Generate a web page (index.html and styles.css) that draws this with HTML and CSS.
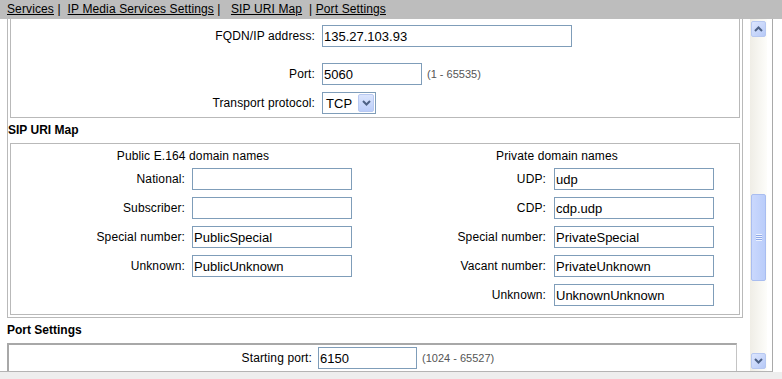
FILE: index.html
```html
<!DOCTYPE html>
<html lang="en">
<head>
    <meta charset="UTF-8">
    <meta name="viewport" content="width=device-width, initial-scale=1.0">
    <title>SIP URI Map</title>
    <link rel="stylesheet" href="styles.css">
</head>
<body>

<!-- Section links -->
<div class="tabs">
    <a href="#">Services</a> | &nbsp;<a href="#">IP Media Services Settings</a> | &nbsp; <a href="#">SIP URI Map</a> &nbsp;| <a href="#">Port Settings</a>
</div>

<div class="frame">
    <div class="pane">
        <div class="outer">
            <!-- Transport (scrolled, top is out of view) -->
            <div class="box box-transport">
                <div class="row">
                    <label>FQDN/IP address:</label>
                    <input type="text" class="field field-fqdn" value="135.27.103.93">
                </div>
                <div class="row row-port">
                    <label>Port:</label>
                    <input type="text" class="field field-port" value="5060">
                    <span class="hint">(1 - 65535)</span>
                </div>
                <div class="row row-select">
                    <label>Transport protocol:</label>
                    <div class="combo">
                        <span class="combo-text">TCP</span>
                        <span class="combo-btn">
                            <svg width="9" height="6" viewBox="0 0 9 6"><polyline points="1,1 4.5,4.5 8,1" fill="none" stroke="#4d6185" stroke-width="2"/></svg>
                        </span>
                    </div>
                </div>
            </div>

            <div class="section-title">SIP URI Map</div>

            <!-- SIP URI Map -->
            <div class="box sip-box">
                <div class="col col-public">
                    <div class="col-head">Public E.164 domain names</div>
                    <div class="row">
                        <label>National:</label>
                        <input type="text" class="field" value="">
                    </div>
                    <div class="row">
                        <label>Subscriber:</label>
                        <input type="text" class="field" value="">
                    </div>
                    <div class="row">
                        <label>Special number:</label>
                        <input type="text" class="field" value="PublicSpecial">
                    </div>
                    <div class="row">
                        <label>Unknown:</label>
                        <input type="text" class="field" value="PublicUnknown">
                    </div>
                </div>
                <div class="col col-private">
                    <div class="col-head">Private domain names</div>
                    <div class="row">
                        <label>UDP:</label>
                        <input type="text" class="field" value="udp">
                    </div>
                    <div class="row">
                        <label>CDP:</label>
                        <input type="text" class="field" value="cdp.udp">
                    </div>
                    <div class="row">
                        <label>Special number:</label>
                        <input type="text" class="field" value="PrivateSpecial">
                    </div>
                    <div class="row">
                        <label>Vacant number:</label>
                        <input type="text" class="field" value="PrivateUnknown">
                    </div>
                    <div class="row">
                        <label>Unknown:</label>
                        <input type="text" class="field" value="UnknownUnknown">
                    </div>
                </div>
            </div>
        </div>

        <div class="section-title section-port">Port Settings</div>

        <!-- Port Settings -->
        <div class="port-box">
            <div class="row">
                <label>Starting port:</label>
                <input type="text" class="field field-start" value="6150">
                <span class="hint">(1024 - 65527)</span>
            </div>
        </div>
    </div>

    <!-- Scrollbar -->
    <div class="scrollbar">
        <div class="sb-btn">
            <svg width="9" height="6" viewBox="0 0 9 6"><polyline points="1,5 4.5,1.5 8,5" fill="none" stroke="#4d6185" stroke-width="2"/></svg>
        </div>
        <div class="sb-track">
            <div class="sb-thumb" style="margin-top: 155px; height: 87px;">
                <span class="grip"></span>
            </div>
        </div>
        <div class="sb-btn">
            <svg width="9" height="6" viewBox="0 0 9 6"><polyline points="1,1 4.5,4.5 8,1" fill="none" stroke="#4d6185" stroke-width="2"/></svg>
        </div>
    </div>
</div>

<div class="statusbar"></div>

</body>
</html>
```

FILE: styles.css
```css
body {
    margin: 0;
    font-family: "Liberation Sans", Arial, sans-serif;
    font-size: 12px;
    letter-spacing: 0.12px;
    color: #000;
    background: #fff;
}
.tabs {
    height: 19px;
    line-height: 19px;
    background: #bdbdbd;
    padding-left: 7px;
    white-space: nowrap;
}
.tabs a {
    color: #000;
}
.frame {
    display: flex;
    width: 772px;
    height: 352px;
    border-right: 1px solid #a9a9a9;
    border-bottom: 1px solid #b4b4b4;
}
.pane {
    width: 750px;
    height: 100%;
    overflow: hidden;
}
.outer {
    margin-left: 7px;
    width: 734px;
    border: 1px solid #b9b9b9;
    border-top: none;
    padding-bottom: 2px;
}
.box {
    margin: 0 2px;
    border: 1px solid #b9b9b9;
}
.box-transport {
    border-top: none;
    padding: 6px 0 3px;
}
.row {
    display: flex;
    align-items: center;
    height: 22px;
}
.row label {
    text-align: right;
    white-space: nowrap;
}
.box-transport .row label {
    width: 304px;
    margin-right: 7px;
}
.row-port {
    margin-top: 16px;
}
.row-select {
    margin-top: 7px;
}
.field {
    box-sizing: border-box;
    height: 22px;
    width: 160px;
    margin: 0;
    padding: 0 1px;
    border: 1px solid #7f9db9;
    font-family: "Liberation Sans", Arial, sans-serif;
    font-size: 13px;
    letter-spacing: 0;
    color: #000;
    background: #fff;
}
.field-fqdn {
    width: 250px;
}
.field-port {
    width: 100px;
}
.field-start {
    width: 99px;
}
.hint {
    font-size: 11px;
    letter-spacing: 0;
    color: #555;
    margin-left: 5px;
}
.combo {
    box-sizing: border-box;
    display: flex;
    align-items: center;
    width: 54px;
    height: 22px;
    border: 1px solid #7f9db9;
    font-size: 13px;
}
.combo-text {
    flex: 1;
    padding-left: 3px;
}
.combo-btn {
    display: flex;
    align-items: center;
    justify-content: center;
    width: 16px;
    height: 18px;
    margin-right: 1px;
    border: 1px solid #b8c9f2;
    border-radius: 2px;
    box-sizing: border-box;
    background: linear-gradient(to bottom, #dbe5fd, #bccefa);
}
.section-title {
    font-weight: bold;
    height: 25px;
    line-height: 25px;
    letter-spacing: 0;
}
.section-port {
    padding-left: 7px;
}
.sip-box {
    display: flex;
    padding: 3px 0 8px;
}
.col {
    width: 364px;
}
.col-head {
    height: 18px;
    line-height: 18px;
    text-align: center;
    margin-bottom: 3px;
}
.col .row + .row {
    margin-top: 7px;
}
.col-public .row label {
    width: 174px;
    margin-right: 7px;
}
.col-private .row label {
    width: 171px;
    margin-right: 8px;
}
.port-box {
    margin-left: 7px;
    width: 730px;
    box-sizing: border-box;
    height: 40px;
    border-top: 2px solid #a8a8a8;
    border-left: 2px solid #a8a8a8;
    border-right: 1px solid #c4c4c4;
    padding-top: 2px;
}
.port-box .row label {
    width: 303px;
    margin-right: 6px;
}
.scrollbar {
    width: 17px;
    margin-right: 5px;
    display: flex;
    flex-direction: column;
    background: linear-gradient(to right, #efede6, #fdfdfa);
}
.sb-btn {
    box-sizing: border-box;
    height: 16px;
    margin: 2px 1px;
    display: flex;
    align-items: center;
    justify-content: center;
    border: 1px solid #b7c8f1;
    border-radius: 2px;
    background: linear-gradient(to bottom right, #dde6fe, #b6c9f7);
}
.sb-track {
    flex: 1;
}
.sb-thumb {
    box-sizing: border-box;
    margin: 0 1px;
    display: flex;
    align-items: center;
    justify-content: center;
    border: 1px solid #a9bdf0;
    border-radius: 2px;
    background: linear-gradient(to right, #cad8fd, #bacdfa);
}
.grip {
    width: 6px;
    height: 7px;
    background: repeating-linear-gradient(to bottom, #eef3ff 0, #eef3ff 1px, #8ea8e8 1px, #8ea8e8 2px);
}
.statusbar {
    height: 7px;
    background: #eeeeee;
}
```
